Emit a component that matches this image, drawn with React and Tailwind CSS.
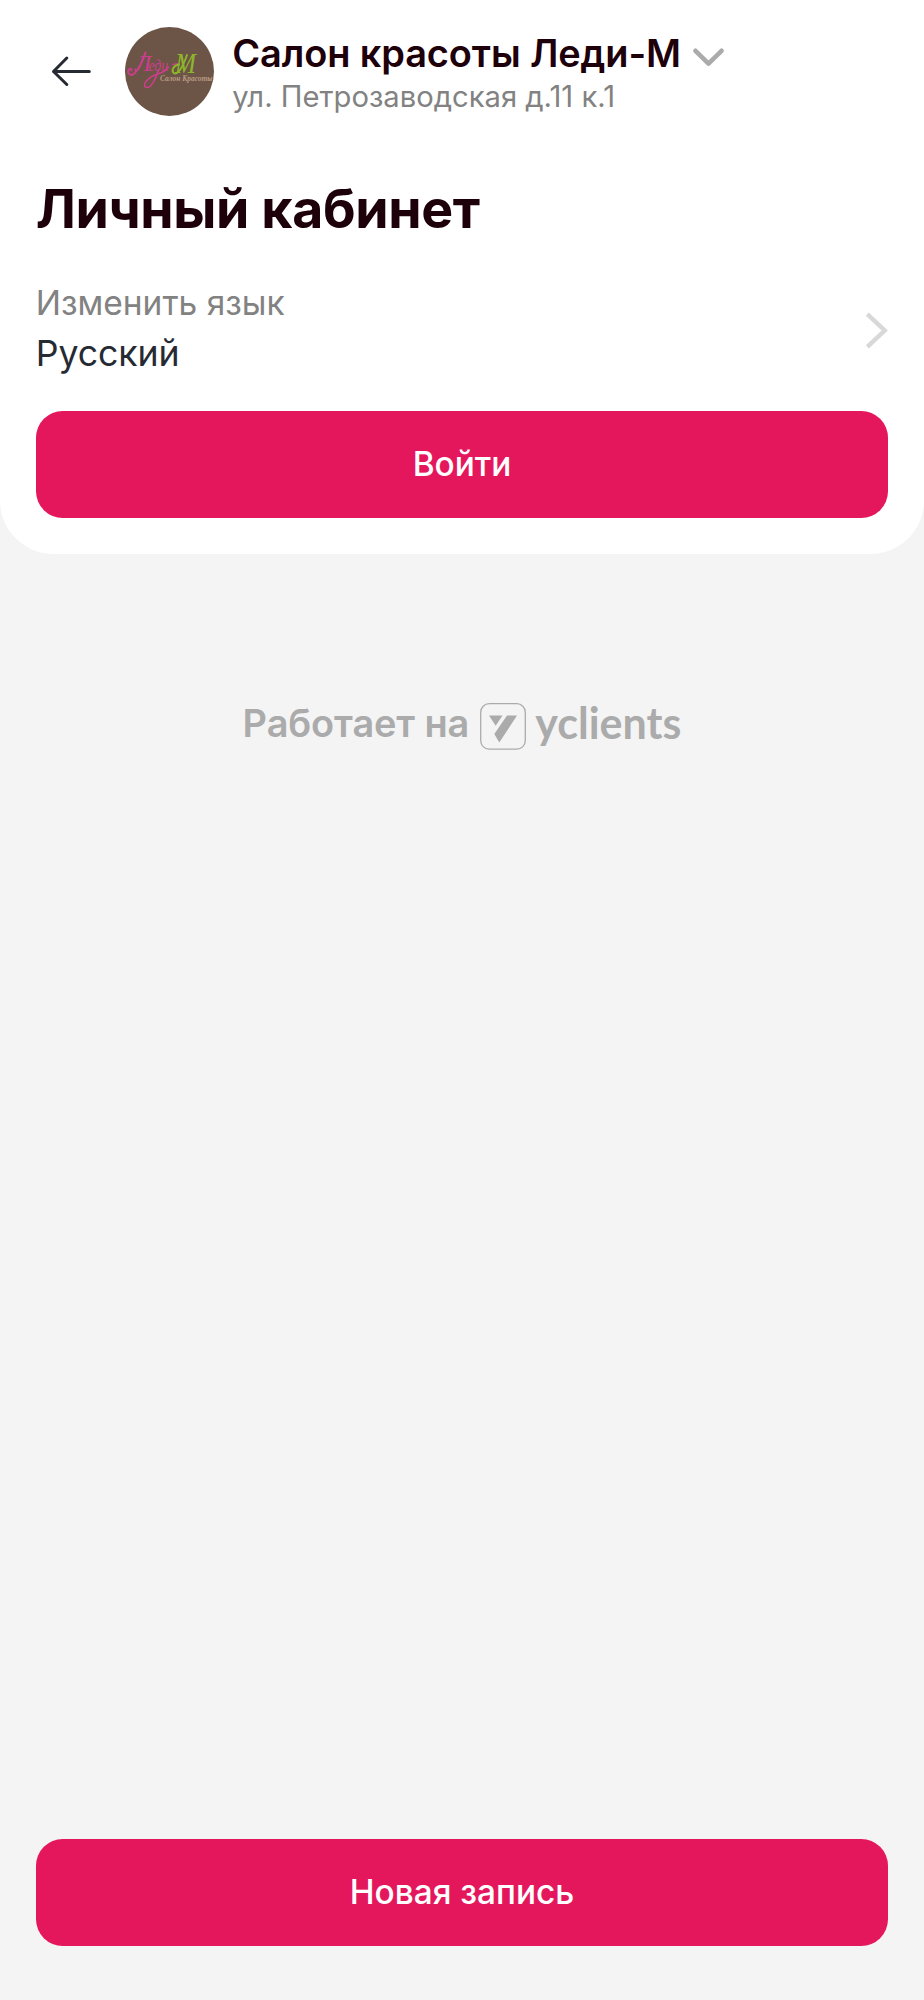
function BackIcon() {
  return (
    <svg width="40" height="32" viewBox="0 0 40 32" fill="none" stroke="#262b33" strokeWidth="3" strokeLinecap="round" strokeLinejoin="round">
      <path d="M38.3 16.500H2.500M15.800 3L2.500 16.500l13.300 13" />
    </svg>
  );
}

function SalonAvatar() {
  return (
    <svg className="block size-[89.3px] shrink-0 rounded-full bg-[#6c5447]" viewBox="0 0 89.3 89.3">
      <g fontFamily="'Liberation Serif', serif" fontStyle="italic">
        <text x="10" y="44.5" fill="#cb3f8a" fontSize="24">
          Л<tspan x="23.500" fontSize="17" textLength="19.500" lengthAdjust="spacingAndGlyphs">еди</tspan>
        </text>
        <text x="50" y="46" fontSize="29" fill="#8db52c" textLength="21" lengthAdjust="spacingAndGlyphs">М</text>
        <text x="35" y="54.5" fontSize="7.2" fontWeight="bold" fill="#b89a80" textLength="52.5" lengthAdjust="spacingAndGlyphs">Салон Красоты</text>
      </g>
      <g fill="none" stroke="#cb3f8a" strokeLinecap="round">
        <path d="M20.500 25.500C18 34 13 44 8 47.500C4 49 2 45 4 42.500C5.500 41 7 42 6.500 43.500" strokeWidth="2" />
        <path d="M33.500 43C31 52 26 61 21.500 60.500C16 59 22 50 34 46.500C39 45 42 42 43.500 40" strokeWidth="1.600" />
        <path d="M48 37.500l4.500-.800" strokeWidth="1.500" />
      </g>
      <path d="M54 37.500C49 38 46 43 48.500 46C52 48.500 57 42 62 28" fill="none" stroke="#8db52c" strokeWidth="1.900" strokeLinecap="round" />
    </svg>
  );
}

function ChevronDown() {
  return (
    <svg className="mt-[21px] ml-[12.500px] shrink-0" width="31" height="19" viewBox="0 0 31 19" fill="none" stroke="#ababab" strokeWidth="4.600" strokeLinecap="round" strokeLinejoin="round">
      <path d="M2.500 2.800L15.500 15.600L28.500 2.800" />
    </svg>
  );
}

function ChevronRight() {
  return (
    <svg className="shrink-0" width="23" height="37" viewBox="0 0 23 37" fill="none" stroke="#d8d8d8" strokeWidth="4.400">
      <path d="M2.300 2.200L19.700 18.500L2.300 34.800" />
    </svg>
  );
}

function YclientsMark() {
  return (
    <svg className="mt-[1px] ml-[10.500px] shrink-0" width="46" height="47" viewBox="0 0 46 47">
      <rect x=".7" y=".7" width="44.600" height="45.400" rx="8.500" fill="none" stroke="#ababab" strokeWidth="1.300" />
      <path d="M9 12.500H22.500L15.700 22.800ZM27 12.500H37L19.300 39.400L14.300 31Z" fill="#ababab" />
    </svg>
  );
}

function Button({ children }) {
  return (
    <button className="flex h-[107.2px] w-full items-center justify-center rounded-[26.8px] bg-[#e5175c] pb-[1.5px] text-[33.4px] leading-[44px] font-[550] text-white">
      {children}
    </button>
  );
}

export default function App() {
  return (
    <div className="flex h-[2000px] w-full flex-col bg-[#f4f4f4] font-[Inter,sans-serif]">
      <main className="h-[553.6px] shrink-0 rounded-b-[53.6px] bg-white px-[35.7px]">
        <header className="flex h-[176.5px] items-start pt-[26.8px]">
          <button className="mr-[33.3px] ml-[15.7px] flex h-[89.3px] items-center" aria-label="Назад">
            <BackIcon />
          </button>
          <SalonAvatar />
          <div className="ml-[18.3px] pt-[3.9px]">
            <div className="text-[37.95px] leading-[45px] font-semibold tracking-[-0.11px] whitespace-nowrap text-[#1d000a]">Салон красоты Леди-М</div>
            <div className="mt-[3px] text-[29.2px] leading-[36px] whitespace-nowrap text-[#828282]">ул. Петрозаводская д.11 к.1</div>
          </div>
          <ChevronDown />
        </header>
        <h1 className="text-[53.57px] leading-[64px] font-bold tracking-[-0.37px] text-[#1d000a]">Личный кабинет</h1>
        <section className="mt-[40.6px] flex h-[129.6px] items-start justify-between">
          <div>
            <div className="text-[33.5px] leading-[44px] text-[#828282]">Изменить язык</div>
            <div className="mt-[4px] text-[35.7px] leading-[48px] tracking-[-0.1px] text-[#262b33]">Русский</div>
          </div>
          <div className="pt-[31px]">
            <ChevronRight />
          </div>
        </section>
        <Button>Войти</Button>
      </main>
      <footer className="mt-[148.4px] flex items-start justify-center text-[#ababab]">
        <span className="-mt-px text-[37.95px] leading-[45px] font-semibold tracking-[-0.12px] whitespace-nowrap">Работает на</span>
        <YclientsMark />
        <span className="-mt-[2px] ml-[9.500px] font-[Lato,sans-serif] text-[43px] leading-[45px] font-bold">yclients</span>
      </footer>
      <div className="mt-auto px-[35.7px] pb-[53.6px]">
        <Button>Новая запись</Button>
      </div>
    </div>
  );
}
